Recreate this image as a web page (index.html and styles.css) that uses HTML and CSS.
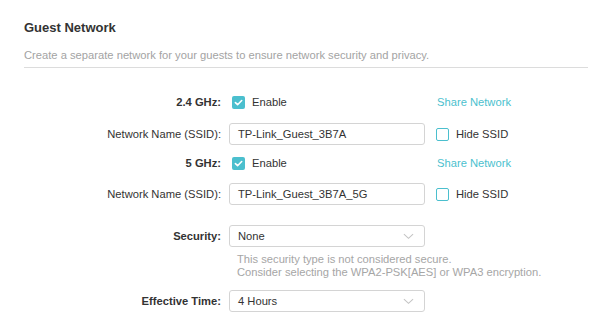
FILE: index.html
```html
<!DOCTYPE html>
<html>
<head>
<meta charset="utf-8">
<link rel="stylesheet" href="styles.css">
</head>
<body>
<div class="page">
  <h2 class="title">Guest Network</h2>
  <p class="desc">Create a separate network for your guests to ensure network security and privacy.</p>
  <div class="divider"></div>
  <div class="form">
    <div class="row r1">
      <div class="label bold">2.4 GHz:</div>
      <div class="control">
        <span class="check checked"><svg viewBox="0 0 13 13" width="13" height="13"><path d="M3.4 6.6 L5.6 8.7 L9.7 4.5" fill="none" stroke="#fff" stroke-width="1.6" stroke-linecap="round" stroke-linejoin="round"/></svg></span>
        <span class="check-text">Enable</span>
      </div>
      <div class="extra"><span class="link">Share Network</span></div>
    </div>
    <div class="row r2">
      <div class="label">Network Name (SSID):</div>
      <div class="control"><div class="input">TP-Link_Guest_3B7A</div></div>
      <div class="extra"><span class="check"></span><span class="check-text">Hide SSID</span></div>
    </div>
    <div class="row r3">
      <div class="label bold">5 GHz:</div>
      <div class="control">
        <span class="check checked"><svg viewBox="0 0 13 13" width="13" height="13"><path d="M3.4 6.6 L5.6 8.7 L9.7 4.5" fill="none" stroke="#fff" stroke-width="1.6" stroke-linecap="round" stroke-linejoin="round"/></svg></span>
        <span class="check-text">Enable</span>
      </div>
      <div class="extra"><span class="link">Share Network</span></div>
    </div>
    <div class="row r4">
      <div class="label">Network Name (SSID):</div>
      <div class="control"><div class="input">TP-Link_Guest_3B7A_5G</div></div>
      <div class="extra"><span class="check"></span><span class="check-text">Hide SSID</span></div>
    </div>
    <div class="row row-sec">
      <div class="label bold">Security:</div>
      <div class="control">
        <div class="input select"><span>None</span><svg class="chev" viewBox="0 0 12 7" width="11" height="7"><path d="M1 1 L6 5.5 L11 1" fill="none" stroke="#c4c4c4" stroke-width="1.2"/></svg></div>
      </div>
    </div>
    <div class="hint">This security type is not considered secure.<br>Consider selecting the WPA2-PSK[AES] or WPA3 encryption.</div>
    <div class="row row-time">
      <div class="label bold">Effective Time:</div>
      <div class="control">
        <div class="input select"><span>4 Hours</span><svg class="chev" viewBox="0 0 12 7" width="11" height="7"><path d="M1 1 L6 5.5 L11 1" fill="none" stroke="#c4c4c4" stroke-width="1.2"/></svg></div>
      </div>
    </div>
  </div>
</div>
</body>
</html>
```
FILE: styles.css
```css
* { box-sizing: border-box; }
html, body { margin: 0; padding: 0; background: #fff; }
body {
  font-family: "Liberation Sans", Arial, sans-serif;
  font-size: 11.2px;
  color: #333;
  width: 606px;
  height: 328px;
  overflow: hidden;
}
.page { padding: 20px 18px 0 24px; }
.title {
  margin: 0;
  font-size: 13px;
  line-height: 16px;
  font-weight: bold;
  color: #333;
}
.desc {
  margin: 12px 0 0 0;
  font-size: 11.2px;
  line-height: 14px;
  color: #a3a3a3;
}
.divider {
  margin-top: 5px;
  height: 1px;
  width: 564px;
  background: #dcdcdc;
}
.form {
  padding-top: 23px;
  display: flex;
  flex-direction: column;
}
.row {
  display: flex;
  align-items: center;
  height: 22px;
}
.r1 { margin-bottom: 10px; }
.r2 { margin-bottom: 7px; }
.r3 { margin-bottom: 9px; }
.row-sec { margin-top: 20px; }
.row-time { margin-top: 11px; }
.label {
  width: 197px;
  text-align: right;
  line-height: 14px;
  color: #333;
}
.label.bold { font-weight: bold; }
.control {
  width: 196px;
  margin-left: 8px;
  display: flex;
  align-items: center;
}
.extra {
  margin-left: 11px;
  display: flex;
  align-items: center;
}
.check {
  display: inline-block;
  width: 13px;
  height: 13px;
  border: 1px solid #4bbfce;
  border-radius: 2px;
  background: #fff;
  flex: none;
}
.control .check { margin-left: 3px; }
.check.checked {
  background: #4bbfce;
  border: none;
}
.check svg { display: block; }
.check-text { margin-left: 7px; line-height: 14px; }
.link { color: #4bbfce; margin-left: 1px; }
.input {
  width: 196px;
  height: 22px;
  border: 1px solid #d4d4d4;
  border-radius: 3px;
  padding: 0 8px;
  display: flex;
  align-items: center;
  line-height: 14px;
  color: #333;
}
.select { justify-content: space-between; padding-right: 10px; }
.chev { display: block; }
.hint {
  margin: 6px 0 0 213px;
  line-height: 13px;
  color: #a6a6a6;
}
```
